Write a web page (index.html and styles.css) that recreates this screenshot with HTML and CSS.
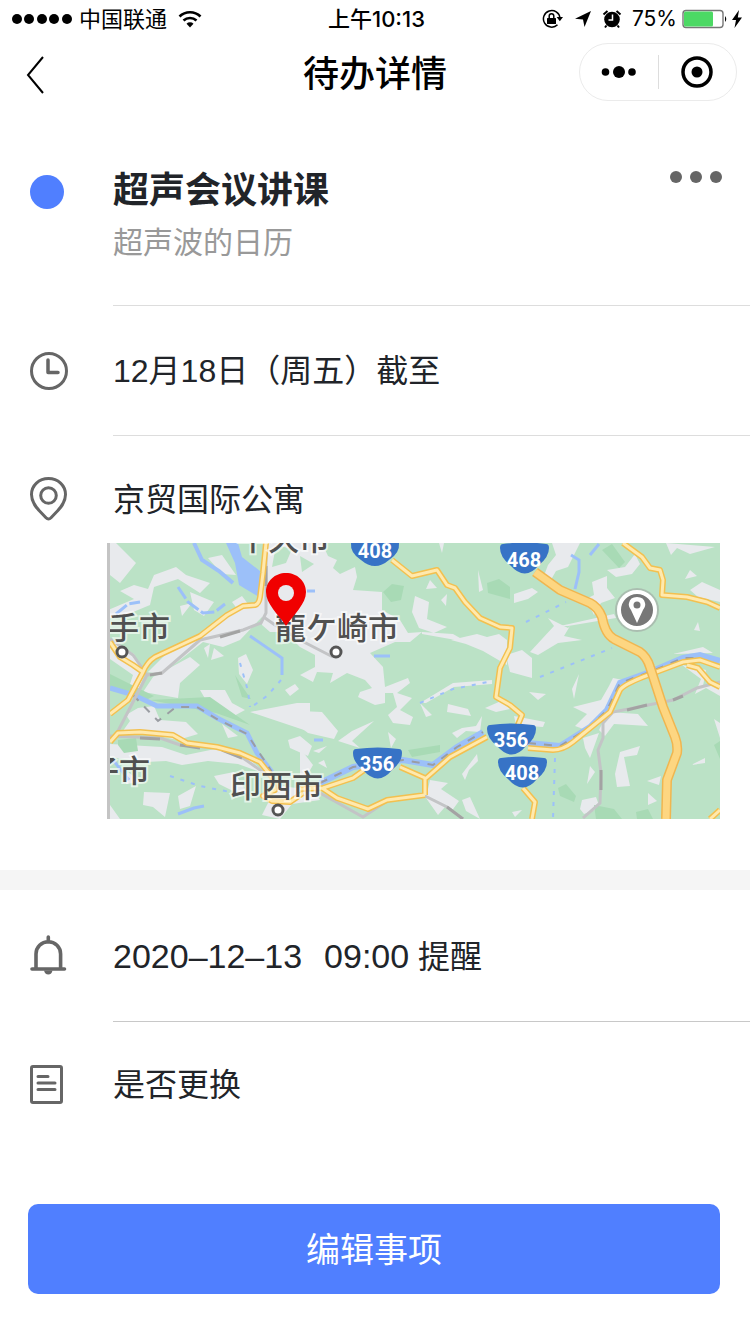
FILE: index.html
```html
<!DOCTYPE html>
<html lang="zh-CN">
<head>
  <meta charset="UTF-8">
  <meta name="viewport" content="width=device-width, initial-scale=1">
  <title>待办详情</title>
  <link rel="stylesheet" href="styles.css">
</head>
<body>
  <!-- Phone status bar -->
  <div class="status">
    <div class="status-left">
      <svg class="signal" width="62" height="12" viewBox="0 0 62 12" aria-hidden="true">
        <circle cx="6" cy="6" r="5"/><circle cx="18" cy="6" r="5"/><circle cx="31" cy="6" r="5"/><circle cx="43" cy="6" r="5"/><circle cx="56" cy="6" r="5"/>
      </svg>
      <span>中国联通</span>
      <svg class="wifi" width="24" height="18" viewBox="0 0 24 18" aria-hidden="true">
        <path d="M1.500 6.500a15 15 0 0 1 21 0M5.500 10.500a9.500 9.500 0 0 1 13 0" fill="none" stroke="#000" stroke-width="2.600"/>
        <path d="M12 17.500 8.500 13.800a5 5 0 0 1 7 0z"/>
      </svg>
    </div>
    <span class="status-time">上午10:13</span>
    <div class="status-right">
      <svg width="22" height="20" viewBox="0 0 22 20" aria-hidden="true">
        <path d="M15.500 15.800A8.300 8.300 0 1 1 18 9" fill="none" stroke="#000" stroke-width="1.500"/>
        <path d="M14.600 8h6.400l-3.200 4.200z"/>
        <rect x="5" y="9" width="9" height="6" rx="0.600"/>
        <path d="M7.200 9V7a2.300 2.300 0 0 1 4.600 0v2" fill="none" stroke="#000" stroke-width="1.500"/>
      </svg>
      <svg width="18" height="18" viewBox="0 0 18 18" aria-hidden="true"><path d="M17 1 10.500 17 9 9.500 1 8.800z"/></svg>
      <svg width="20" height="20" viewBox="0 0 20 20" aria-hidden="true">
        <circle cx="10" cy="10.500" r="7.800"/>
        <path d="M1.500 5.500 5.500 2M18.500 5.500 14.500 2M4.500 16.500 3 18.500M15.500 16.500 17 18.500" stroke="#000" stroke-width="2"/>
        <path d="M10.500 5.500v5.500H6.500" fill="none" stroke="#fff" stroke-width="1.500"/>
      </svg>
      <span>75%</span>
      <svg class="battery" width="46" height="20" viewBox="0 0 46 20" aria-hidden="true">
        <rect x="1" y="1.500" width="40" height="17" rx="3" fill="#fff" stroke="#777" stroke-width="1.400"/>
        <rect x="2" y="2.500" width="29" height="15" rx="1.500" fill="#4cd964"/>
        <path d="M43 7q2.500 3 0 6z"/>
      </svg>
      <svg width="10" height="18" viewBox="0 0 10 18" aria-hidden="true"><path d="M7 0 0 10h4L2.500 18 10 7.500H5.800z"/></svg>
    </div>
  </div>

  <header class="nav">
    <a class="back" href="#" aria-label="返回">
      <svg width="20" height="40" viewBox="0 0 20 40"><path d="M17 2 2 20l15 18" fill="none" stroke="#000" stroke-width="2"/></svg>
    </a>
    <h1>待办详情</h1>
    <div class="capsule">
      <button type="button" aria-label="更多">
        <svg width="36" height="14" viewBox="0 0 36 14"><circle cx="4.500" cy="7" r="3.800"/><circle cx="18" cy="7" r="6"/><circle cx="31" cy="7" r="3.800"/></svg>
      </button>
      <button type="button" aria-label="关闭">
        <svg width="34" height="34" viewBox="0 0 34 34"><circle cx="17" cy="17" r="14" fill="none" stroke="#000" stroke-width="3.500"/><circle cx="17" cy="17" r="5.500"/></svg>
      </button>
    </div>
  </header>

  <main>
    <section class="row event">
      <div class="icon"><span class="dot"></span></div>
      <div class="content">
        <div class="event-text">
          <h2>超声会议讲课</h2>
          <p class="calendar">超声波的日历</p>
        </div>
        <button class="more" type="button" aria-label="更多操作">
          <svg width="54" height="14" viewBox="0 0 54 14"><circle cx="7" cy="7" r="6"/><circle cx="27" cy="7" r="6"/><circle cx="47" cy="7" r="6"/></svg>
        </button>
      </div>
    </section>

    <section class="row date">
      <div class="icon">
        <svg width="40" height="48" viewBox="0 0 40 48"><circle cx="19" cy="24" r="17.500"/><path d="M18 13v12.500h10" stroke-width="3.500" stroke-linecap="round" stroke-linejoin="round"/></svg>
      </div>
      <div class="content"><p>12月18日（周五）截至</p></div>
    </section>

    <section class="row place">
      <div class="icon">
        <svg width="40" height="48" viewBox="0 0 40 48"><path d="M18.500 2.500C9 2.500 1.500 9.500 1.500 18.500c0 8 5 13.500 10 18.500l4.500 4.800q2.500 2.600 5 0L25.500 37c5-5 10-10.500 10-18.500 0-9-7.500-16-17-16z"/><circle cx="18.500" cy="19.500" r="7.800"/></svg>
      </div>
      <div class="content"><p>京贸国际公寓</p></div>
    </section>

    <div class="map">
      <svg viewBox="107 543 613 276" role="img" aria-label="地图">
        <rect x="107" y="543" width="613" height="276" fill="#bbe2c6"/>
        <!-- built-up areas -->
        <g fill="#e8eaed">
          <path d="M110 543h6l20 20-16 20-10-8zM208 558l14-3 14 20-14-1zM154 575l22-8 10 8 24 8-10 10-22-14-24 8-4 18-24 10-20 4v-8l28-12-14-8 14-6 14 4z"/>
          <path d="M262 600L262 617 240 640 223 647 203 642 180 660 160 674 148 672 165 655 200 634 243 608zM180 606l12-3-10 13zM190 592l24 10-10 14-10-6z"/>
          <path d="M268 543L322 543 328 556 337 560 333 568 340 574 355 567 357 577 353 590 382 592 382 610 400 620 408 633 422 632 410 642 395 642 370 653 383 667 385 687 408 678 410 683 397 693 412 698 400 710 413 717 410 725 393 723 388 715 397 707 393 693 385 693 385 703 375 705 358 697 360 692 372 688 365 680 347 673 330 683 333 673 317 672 313 682 300 675 315 667 315 655 300 647 285 632 270 632 262 625 262 600z"/>
          <path d="M110 640l24 14 10 22-8 20-8-6 5-15-23-16zM153 677L190 657 200 665 180 683 178 698 143 692zM204 648l6-4-2 14zM214 648l10 8-13 4zM238 658l8-4 7 16-6 14-8-10zM200 690L225 690 232 703 245 710 232 717 210 707zM250 712L297 703 310 703 310 732zM285 690l10-6 4 5-9 7zM232 602l10-6 6 8-10 6z"/>
          <path d="M138 708l16-2 6 14 26 2 12 12-20 6-30-6-28 1 10-14-4-6zM222 724l16 12-10 2zM110 744l52 3 24 8 34-7 28 10 18 16-28-10-30-3-26 4-16-4-20 1-36-5zM214 776l20-4 14 22-13-2-16-8zM178 796l18-10-6 20-10 3zM144 792l26 1-5 24-12-10-10-2zM128 772l13 10-15 2zM110 805l10 14h-10zM288 740l12-4 12 10-4 10-18-8zM280 786l34 4 6 10-28 4-12 15-18-4 8-16z"/>
          <path d="M300 711l22 1 16 19-4 8-26-6-8-6zM374 721l-22 20 8 7-22-7 14-10zM300 748l13 17-8 14-5-4zM313 751l14-5-8 7zM318 763l6-3 3 8zM388 732l8 7-5 9zM420 703l33-20 39-3v4l-38 3-28 16zM420 703l12 12-6 2zM448 704l20 5 3 7-24-4zM485 708l16-7 9 8-14 3zM452 733l10-5 14-2 6-10-2 16-14-1-9 7zM462 774l15-20 1 7-9 9-4 10z"/>
          <path d="M430 780l18 3-7 6 18 12-8 11-6-5-7 8-12-17zM462 800l8-3 10 22-14-8zM430 580l7 8-11 1zM439 543h5l-2 10zM478 570l5 20-4 2zM415 596l14 6-2 17 20 8-13 6-15-5-7-16zM441 600l6-6-1 12zM422 632l31 2 14 8-45-8zM451 640l26-6 10 3 12-3 8 6v25l-24-14-17-7z"/>
          <path d="M506 655l16-5 10 8 0 20-22-6zM530 652l24-26-6-8 20 10 2-2-6 10 18 4-24 3-20 12z"/>
          <path d="M552 543h28l-12 24-12 4-8 14-6-4 6-16 8-10zM592 582l15-6v12l8 10-14 5-7 12-8-16 8-4zM607 570l18-3 10-13 5 10-8 10-16 3zM560 626l54-12 2 4-48 8zM698 622l2 9-6-1zM666 543l49 4-25 7-13-6-6 7zM690 570l7 6-12 3zM690 590l12-8 18 8v12l-22-5zM579 674l-5 25-2-10zM529 692l17 2-8 6zM514 716l31 6-2 5-27-2zM573 707l28-7 8-14 4-8 10 2-14 20-2 14-21 16-11-4 12-12zM608 712l30 2 10 12-16-1-18-1-9 12-6-6zM673 654l30-7 10 6zM682 665l24 5-3 16 17-2v12l-14-8-11 6 6-15zM663 707l6 6 7 13zM714 719l6 4v15zM620 752l20-6-3 9-13 2 6 29-13 1-2-13zM647 781l14-5-2 9zM648 793l9 8-9 4zM583 738l16-5-9 25-5-10zM590 766l5 6-8 12zM582 800l14-3 4 11-16 6-4-5zM691 765l14-7v5zM514 594l18-6 6 4-10 7-14 4zM512 812l10-2-7 7z"/>
        </g>
        <path d="M276 545l16 4-6 14-14 4zM300 556l14 8-12 8z" fill="#bbe2c6"/>
        <g fill="#a8dab5">
          <path d="M383 592l9-8 12 2-3 14-10 2zM487 583l12-4 11 8v12l-22-6zM602 550l10-6 13 18-6 6zM408 750l32-5v7l-28 5zM558 788l8-4 10 12-2 6-14-6zM594 805l20 4 8 10h-26zM636 812l12-3 5 10h-16zM714 745l6-4v18zM235 675l9 14 7 10-9-2zM118 740l18-2 2 13-14 2-6-8zM110 674l44 22-8 4-36-13zM150 700l60-3 40 28-34-12z"/>
        </g>
        <!-- water -->
        <path d="M226 543h12l4 14 18 14-1 26-20-12-4-22z" fill="#9cc0f9"/>
        <g class="water">
          <path d="M194 543l8 17 17 11 14 12" stroke-width="4"/>
          <path d="M116 614l12-10 12-2M178 587l10 15 15 11 12-1 10-8" stroke-dasharray="14 3"/>
          <path d="M110 688l24 7 23 11h40l20 12 30 15 10 20 15 19" stroke-width="5"/>
          <path d="M320 783l33-16 50-7 30 5 24-18 26-15M528 743l32 3 30-19 17-17 13-27 30-11 33-14 17-3 20 6" stroke-width="6"/>
          <path d="M113 760l16 20M250 636l32 22v17M575 589l4-17v-12l-8-5M590 555l9-11M178 814l16-6 10-2M374 656h16M307 591h8M314 740h9"/>
          <path d="M281 680l-14 16-17 12M240 663l8 28 2 16M170 776l30 10 30 6M420 703l33-14 40-8M526 622l40-20M540 677l72-29M555 758l-2 61" stroke-dasharray="4 7" stroke-width="2"/>
        </g>
        <path class="ferry" d="M133 695l25 26 18-14h21l20 12 30 15 25 38M320 783l33-16 50-7 30 5 24-18 26-15M528 743l32 3 30-19 17-17 13-27 30-11 33-14h17"/>
        <!-- railways -->
        <g class="rail">
          <path d="M266 543v70l-5 10-18 7-43 10-38 33-15 2-30 58M110 639l23 16 14 20M110 736l50 2 20 7 40 3 23 10 27 19M265 618l10 7 25 15 33 17"/>
          <path d="M320 793l43 24 24-16 36-6 24 12 16 12M720 682l-23 6-24 12-60 12-10 11v15l-5 12 3 23-1 30-17 15"/>
        </g>
        <path class="rail-dash" d="M266 566v20M220 637l20-6M150 675l12-2M140 738l20 1M180 745l20 3M222 750l20 8M387 800l20-3M447 807l16 12M627 710l20-5M673 700l10-4M601 770v20"/>
        <!-- roads: dark casing first, lighter fill over it -->
        <g class="road-edge">
          <path id="roads" d="M266 543l-3 30-3 24q-1 7-5 8l-12 1-16 9-27 21-45 21q-8 5-12 15l-15 28-18 14M110 642l10 15 13 8 10 7M110 742l8-9 22-1 33 3 14 8 30 4 23 6 20 9 12 15 3 13-12 6 9 5 18 1 13-9M392 560l20 16 25-6 10 15 8 3 10 14 15 16 20 9 12 1-2 20-10 20-4 29 14 8 12 10-5 12M300 789l23-1 30-10 14-10M400 767l25 11v17M322 788l15 10 31 11 19-9 38-5M424 780l26-23 37-20M528 748l25 2q10 0 20-8l37-30 10-22q3-5 23-13l40-15 17-2 20 7M687 665l11 3 12 14 10 5M623 543l19 14 8 11 10 2 3 10-1 15 25 2 20 5 13 6M523 788l12 14-3 17M710 819l10-9"/>
        </g>
        <use href="#roads" class="road-fill"/>
        <path class="highway-edge" d="M535 572l25 18 30 13q8 4 12 14 3 17 12 22l26 13q7 5 10 15l13 40 12 30q3 8 2 16l-10 27-1 39"/>
        <path class="highway-fill" d="M535 572l25 18 30 13q8 4 12 14 3 17 12 22l26 13q7 5 10 15l13 40 12 30q3 8 2 16l-10 27-1 39"/>
        <!-- towns -->
        <g class="stop">
          <circle cx="122" cy="652" r="5"/><circle cx="336" cy="652" r="5"/><circle cx="278" cy="810" r="5"/>
        </g>
        <g class="town">
          <text x="108" y="639">手市</text>
          <text x="275" y="639">龍ケ崎市</text>
          <text x="88" y="782">子市</text>
          <text x="230" y="797">印西市</text>
          <text x="237" y="550">牛久市</text>
        </g>
        <!-- route shields -->
        <g class="shield">
          <path d="M351 543q-1 10 10 17 14 12 28 0 11-7 10-17z"/>
          <path d="M503 544q22-3 43 0 3 0 3 4 0 9-10 17-14 17-29 0-10-8-10-17 0-4 3-4z"/>
          <path d="M356 749q22-3 43 0 3 0 3 4 0 9-10 17-14 17-29 0-10-8-10-17 0-4 3-4z"/>
          <path d="M490 725q22-3 43 0 3 0 3 4 0 9-10 17-14 17-29 0-10-8-10-17 0-4 3-4z"/>
          <path d="M501 758q22-3 43 0 3 0 3 4 0 9-10 17-14 17-29 0-10-8-10-17 0-4 3-4z"/>
        </g>
        <g class="route">
          <text x="375" y="558">408</text>
          <text x="524" y="567">468</text>
          <text x="377" y="771">356</text>
          <text x="511" y="747">356</text>
          <text x="522" y="780">408</text>
        </g>
        <circle cx="637" cy="610" r="22" fill="#999" opacity="0.500"/>
        <circle cx="637" cy="610" r="18" fill="#777" stroke="#fff" stroke-width="4"/>
        <path d="M637 623l-6-13q-3-4-2-7 1-6 8-6t8 6q1 3-2 7z" fill="#fff"/>
        <circle cx="637" cy="605" r="3.500" fill="#777"/>
        <!-- selected place -->
        <path d="M286 573c-11 0-20 8-20 19 0 12 12 22 20 34 8-12 20-22 20-34 0-11-9-19-20-19z" fill="#f00000"/>
        <circle cx="286" cy="593" r="8" fill="#e8eaed"/>
        <rect x="107" y="543" width="3" height="276" fill="#c4c4c4"/>
      </svg>
    </div>

    <section class="row remind">
      <div class="icon">
        <svg width="40" height="48" viewBox="0 0 40 48"><path d="M6 36V22a12.300 12.300 0 0 1 24.600 0v14M2 37h32.500M18.300 10V5" stroke-width="3.600" stroke-linecap="round"/><path d="M14 38.500h8.500q-.8 4-4.200 4t-4.300-4z" fill="#666" stroke="none"/></svg>
      </div>
      <div class="content"><p><time>2020–12–13</time><time class="clock">09:00</time> 提醒</p></div>
    </section>

    <section class="row note">
      <div class="icon">
        <svg width="40" height="48" viewBox="0 0 40 48"><rect x="1.500" y="5.500" width="30" height="36" rx="1.500"/><path d="M8 15.500h10M8 22h17M8 28.500h17" stroke-linecap="round"/></svg>
      </div>
      <div class="content"><p>是否更换</p></div>
    </section>

    <button class="edit" type="button">编辑事项</button>
  </main>
</body>
</html>
```
FILE: styles.css
```css
* {
  box-sizing: border-box;
}

body {
  margin: 0;
  background-color: #fff;
  color: #212429;
  font-family: "Liberation Sans", "Noto Sans CJK SC", sans-serif;
  font-size: 32px;
  line-height: 48px;
}

h1, h2, p {
  margin: 0;
}

button {
  padding: 0;
  border: none;
  background: none;
  font-family: inherit;
  cursor: pointer;
}

svg {
  display: block;
}

/* status bar */
.status {
  display: grid;
  grid-template-columns: 1fr auto 1fr;
  align-items: center;
  height: 38px;
  padding: 0 8px 0 11px;
  color: #000;
  font-family: Inter, "Noto Sans CJK SC", sans-serif;
  font-size: 22px;
  line-height: 38px;
}

.status-left,
.status-right {
  display: flex;
  align-items: center;
}

.status-left {
  gap: 6px;
}

.wifi {
  margin-left: 5px;
}

.status-time {
  font-weight: 500;
}

.status-right {
  justify-content: flex-end;
  gap: 10px;
  font-size: 21px;
}

.battery {
  margin: 0 -6px 0 -5px;
}

/* navigation bar */
.nav {
  display: grid;
  grid-template-columns: 1fr auto 1fr;
  align-items: center;
  padding: 5px 13px 0;
  color: #000;
}

.nav h1 {
  padding-top: 6px;
  font-size: 36px;
  font-weight: 500;
}

.back {
  justify-self: start;
  padding: 6px 0 0 13px;
}

.capsule {
  display: flex;
  align-items: center;
  justify-self: end;
  width: 158px;
  height: 58px;
  border: 1px solid #ebebeb;
  border-radius: 29px;
}

.capsule button {
  display: flex;
  flex: 1;
  align-items: center;
  justify-content: center;
  height: 34px;
}

.capsule button + button {
  border-left: 1px solid #ddd;
}

/* detail rows */
.row {
  display: grid;
  grid-template-columns: 83px 1fr;
  padding-left: 30px;
}

.icon svg {
  fill: none;
  stroke: #666;
  stroke-width: 3;
}

.content {
  border-bottom: 1px solid #ddd;
}

.event {
  padding-top: 64px;
}

.event .content {
  display: flex;
  justify-content: space-between;
  align-items: flex-start;
  padding: 0 27px 42px 0;
}

.event-text {
  padding-top: 2px;
}

.event h2 {
  font-size: 36px;
}

.calendar {
  margin-top: 8px;
  color: #999;
  font-size: 30px;
  line-height: 40px;
}

.dot {
  display: block;
  width: 34px;
  height: 34px;
  margin-top: 10px;
  border-radius: 50%;
  background-color: #507fff;
}

.more {
  padding-top: 5px;
}

.more svg {
  fill: #666;
}

.date,
.place,
.remind,
.note {
  padding-top: 40px;
}

.date {
  padding-top: 41px;
}

.date .content,
.remind .content {
  padding-bottom: 40px;
}

.place .content,
.note .content {
  border-bottom: none;
}

.remind .content {
  border-color: #c8c8c8;
}

time {
  font-size: 34px;
}

.clock {
  margin-left: 22px;
}

/* map */
.map {
  margin-right: 30px;
  margin-left: 107px;
  padding: 19px 0 51px;
}

.map svg {
  width: 100%;
  height: auto;
}

.water {
  fill: none;
  stroke: #9cc0f9;
  stroke-width: 3;
}

.ferry {
  fill: none;
  stroke: #9a9da3;
  stroke-width: 2;
  stroke-dasharray: 8 8;
}

.rail {
  fill: none;
  stroke: #c3c4c6;
  stroke-width: 3;
}

.rail-dash {
  fill: none;
  stroke: #a3a3a3;
  stroke-width: 3;
}

.road-edge {
  fill: none;
  stroke: #f3c04f;
  stroke-width: 6;
  stroke-linejoin: round;
}

.road-fill {
  fill: none;
  stroke: #ffe9ae;
  stroke-width: 3;
  stroke-linejoin: round;
}

.highway-edge {
  fill: none;
  stroke: #f0b650;
  stroke-width: 10;
  stroke-linejoin: round;
}

.highway-fill {
  fill: none;
  stroke: #fdd681;
  stroke-width: 7;
  stroke-linejoin: round;
}

.stop {
  fill: #fff;
  stroke: #555;
  stroke-width: 3;
}

.town {
  fill: #505050;
  stroke: #fff;
  stroke-width: 4px;
  stroke-opacity: 0.6;
  paint-order: stroke;
  font-family: "Noto Sans CJK JP", sans-serif;
  font-size: 31px;
  font-weight: 500;
}

.shield {
  fill: #3773c6;
}

.route {
  fill: #fff;
  font-family: Roboto, sans-serif;
  font-size: 20px;
  font-weight: 700;
  text-anchor: middle;
}

/* reminder and note */
.remind {
  border-top: 20px solid #f5f5f5;
  padding-top: 42px;
}

.note {
  padding-top: 39px;
}

.edit {
  display: block;
  width: calc(100% - 58px);
  height: 90px;
  margin: 95px 30px 40px 28px;
  padding-bottom: 4px;
  border-radius: 10px;
  background-color: #507fff;
  color: #fff;
  font-size: 34px;
}
```
